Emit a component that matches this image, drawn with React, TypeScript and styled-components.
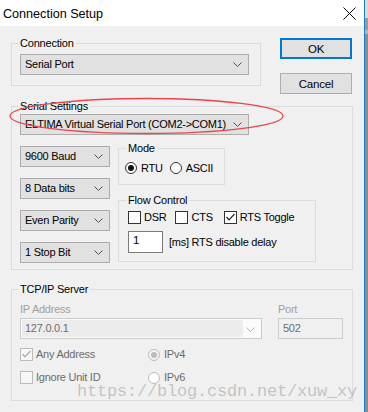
import React from 'react';
import styled, { createGlobalStyle } from 'styled-components';

const GlobalStyle = createGlobalStyle`
  html, body {
    margin: 0;
    padding: 0;
    background: #f0f0f0;
  }
  body {
    font-family: 'Liberation Sans', Arial, sans-serif;
    font-size: 11px;
    color: #000;
  }
`;

const Chevron = ({ color = '#505050' }: { color?: string }) => (
  <svg width="9" height="5" viewBox="0 0 9 5">
    <polyline points="0.5,0.5 4.5,4.5 8.5,0.5" fill="none" stroke={color} strokeWidth="1" />
  </svg>
);

const Combo = ({ text, width, disabled }: { text: string; width: number; disabled?: boolean }) => (
  <ComboFrame $w={width} $disabled={disabled}>
    <ComboText $disabled={disabled}>{text}</ComboText>
    <Chevron color={disabled ? '#b5b5b5' : '#505050'} />
  </ComboFrame>
);

const Check = ({ label, checked, disabled, gap = 10 }: { label: string; checked?: boolean; disabled?: boolean; gap?: number }) => (
  <Choice $gap={gap} $disabled={disabled}>
    <CheckBox $disabled={disabled}>
      {checked && (
        <svg width="11" height="11" viewBox="0 0 11 11">
          <polyline points="1.5,5 4,7.8 9.5,2" fill="none" stroke={disabled ? '#a8a8a8' : '#222'} strokeWidth="1.2" />
        </svg>
      )}
    </CheckBox>
    {label}
  </Choice>
);

const Radio = ({ label, checked, disabled, gap = 7 }: { label: string; checked?: boolean; disabled?: boolean; gap?: number }) => (
  <Choice $gap={gap} $disabled={disabled}>
    <RadioDot $disabled={disabled} $checked={checked} />
    {label}
  </Choice>
);

const App = () => {
  return (
    <>
      <GlobalStyle />
      <Screen>
        <DialogWindow>
          <TitleBar>
            <Title>Connection Setup</Title>
            <svg width="13" height="13" viewBox="0 0 13 13">
              <path d="M0.5 0.5 L12.5 12.5 M12.5 0.5 L0.5 12.5" stroke="#000" strokeWidth="1" />
            </svg>
          </TitleBar>

          <Body>
            <TopRow>
              <Group $w={250} $pad="5px 11px 10px 8px">
                <Legend>Connection</Legend>
                <Combo text="Serial Port" width={229} />
              </Group>
              <ButtonCol>
                <DlgButton $default>OK</DlgButton>
                <DlgButton>Cancel</DlgButton>
              </ButtonCol>
            </TopRow>

            <Group $pad="2px 8px 6px 8px" $mt={6}>
              <Legend>Serial Settings</Legend>
              <Combo text="ELTIMA Virtual Serial Port (COM2->COM1)" width={229} />
              <SerialRow>
                <SelectCol>
                  <Combo text="9600 Baud" width={90} />
                  <Combo text="8 Data bits" width={90} />
                  <Combo text="Even Parity" width={90} />
                  <Combo text="1 Stop Bit" width={90} />
                </SelectCol>
                <OptionCol>
                  <Group $w={107} $pad="8px 6px 10px 6px">
                    <Legend $ml={1}>Mode</Legend>
                    <OptionRow>
                      <Radio label="RTU" checked />
                      <Radio label="ASCII" />
                    </OptionRow>
                  </Group>
                  <Group $w={198} $pad="5px 6px 8px 9px">
                    <Legend $ml={-2}>Flow Control</Legend>
                    <OptionRow>
                      <Check label="DSR" gap={9} />
                      <Check label="CTS" gap={11} />
                      <Check label="RTS Toggle" checked />
                    </OptionRow>
                    <DelayRow>
                      <TextBox>1</TextBox>
                      [ms] RTS disable delay
                    </DelayRow>
                  </Group>
                </OptionCol>
              </SerialRow>
            </Group>

            <Group $pad="8px 8px 16px 8px" $mt={13}>
              <Legend>TCP/IP Server</Legend>
              <TcpGrid>
                <FieldLabel>IP Address</FieldLabel>
                <FieldLabel>Port</FieldLabel>
                <Combo text="127.0.0.1" width={242} disabled />
                <PortBox>502</PortBox>
              </TcpGrid>
              <TcpOptions>
                <Check label="Any Address" checked disabled />
                <Radio label="IPv4" checked disabled gap={4} />
                <Check label="Ignore Unit ID" disabled />
                <Radio label="IPv6" disabled gap={4} />
              </TcpOptions>
            </Group>
          </Body>

          <EllipseMark width="300" height="50" viewBox="0 0 300 50">
            <ellipse cx="146.5" cy="26" rx="136.5" ry="17.5" fill="none" stroke="#e8474c" strokeWidth="1.3" />
          </EllipseMark>
          <Watermark>https://blog.csdn.net/xuw_xy</Watermark>
        </DialogWindow>
        <Edge />
      </Screen>
    </>
  );
};

export default App;

const Screen = styled.div`
  display: flex;
  width: 368px;
  height: 412px;
  overflow: hidden;
`;

const DialogWindow = styled.div`
  position: relative;
  display: flex;
  flex-direction: column;
  width: 364px;
  height: 412px;
  background: #f0f0f0;
  border-right: 1px solid #1a7fd4;
`;

const Edge = styled.div`
  flex: 1;
  background: linear-gradient(#dcdcdc 0 18px, #9a9a9a 18px 30px, #b4b4b4 30px 34px, #8c8c8c 34px);
`;

const TitleBar = styled.div`
  display: flex;
  align-items: center;
  justify-content: space-between;
  height: 26px;
  padding: 0 8px 0 3px;
  background: #fff;
`;

const Title = styled.span`
  font-size: 12.6px;
  line-height: 16px;
  margin-top: 2px;
`;

const Body = styled.div`
  display: flex;
  flex-direction: column;
  padding: 11px 11px 0 11px;
`;

const TopRow = styled.div`
  display: flex;
  align-items: flex-start;
  gap: 19px;
`;

const Group = styled.fieldset<{ $w?: number; $pad: string; $mt?: number }>`
  box-sizing: border-box;
  width: ${(p) => (p.$w ? `${p.$w}px` : 'auto')};
  min-width: 0;
  margin: ${(p) => p.$mt || 0}px 0 0 0;
  padding: ${(p) => p.$pad};
  border: 1px solid #dcdcdc;
`;

const Legend = styled.legend<{ $ml?: number }>`
  margin-left: ${(p) => (p.$ml === undefined ? -2 : p.$ml)}px;
  padding: 0 2px;
  font-size: 11px;
  line-height: 12px;
  letter-spacing: -0.2px;
`;

const ComboFrame = styled.div<{ $w: number; $disabled?: boolean }>`
  box-sizing: border-box;
  display: flex;
  align-items: center;
  justify-content: space-between;
  width: ${(p) => p.$w}px;
  height: 21px;
  padding: ${(p) => (p.$disabled ? '1px 6px 0 1px' : '0 6px 0 4px')};
  border: 1px solid ${(p) => (p.$disabled ? '#cccccc' : '#adadad')};
  background: ${(p) => (p.$disabled ? '#fbfbfb' : '#e1e1e1')};
  white-space: nowrap;
`;

const ComboText = styled.span<{ $disabled?: boolean }>`
  font-size: 11px;
  line-height: 17px;
  letter-spacing: -0.25px;
  color: ${(p) => (p.$disabled ? '#6d6d6d' : '#000')};
  ${(p) =>
    p.$disabled &&
    `
    align-self: stretch;
    width: 218px;
    margin-bottom: 1px;
    padding-left: 3px;
    background: #ececec;
  `}
`;

const ButtonCol = styled.div`
  display: flex;
  flex-direction: column;
  gap: 14px;
  margin-top: 1px;
`;

const DlgButton = styled.button<{ $default?: boolean }>`
  box-sizing: border-box;
  width: 72px;
  height: 21px;
  padding: 0;
  font-family: 'Liberation Sans', Arial, sans-serif;
  font-size: 11.5px;
  letter-spacing: -0.2px;
  color: #000;
  background: #e1e1e1;
  border: ${(p) => (p.$default ? '2px solid #0078d7' : '1px solid #adadad')};
`;

const SerialRow = styled.div`
  display: flex;
  gap: 8px;
  margin-top: 7px;
`;

const SelectCol = styled.div`
  display: flex;
  flex-direction: column;
  gap: 11px;
  padding-top: 4px;
`;

const OptionCol = styled.div`
  display: flex;
  flex-direction: column;
  gap: 9px;
`;

const OptionRow = styled.div`
  display: flex;
  align-items: center;
  height: 12px;
`;

const Choice = styled.label<{ $gap: number; $disabled?: boolean }>`
  display: flex;
  align-items: center;
  gap: 4px;
  margin-right: ${(p) => p.$gap}px;
  font-size: 11px;
  line-height: 13px;
  letter-spacing: -0.25px;
  color: ${(p) => (p.$disabled ? '#6d6d6d' : '#000')};
  white-space: nowrap;
`;

const CheckBox = styled.span<{ $disabled?: boolean }>`
  box-sizing: border-box;
  display: flex;
  width: 13px;
  height: 13px;
  margin-right: -1px;
  border: 1px solid ${(p) => (p.$disabled ? '#bcbcbc' : '#333')};
  background: ${(p) => (p.$disabled ? '#f7f7f7' : '#fff')};
`;

const RadioDot = styled.span<{ $disabled?: boolean; $checked?: boolean }>`
  box-sizing: border-box;
  position: relative;
  width: 12px;
  height: 12px;
  border-radius: 50%;
  border: 1px solid ${(p) => (p.$disabled ? '#bcbcbc' : '#333')};
  background: ${(p) => (p.$disabled && p.$checked ? '#f4f4f4' : '#fff')};

  &::after {
    content: '';
    display: ${(p) => (p.$checked ? 'block' : 'none')};
    position: absolute;
    left: 2px;
    top: 2px;
    width: 6px;
    height: 6px;
    border-radius: 50%;
    background: ${(p) => (p.$disabled ? '#bcbcbc' : '#111')};
  }
`;

const DelayRow = styled.div`
  display: flex;
  align-items: center;
  gap: 6px;
  margin-top: 8px;
  font-size: 11px;
  letter-spacing: -0.25px;
  white-space: nowrap;
`;

const TextBox = styled.div`
  box-sizing: border-box;
  width: 35px;
  height: 22px;
  padding: 2px 0 0 4px;
  border: 1px solid #7a7a7a;
  background: #fff;
  font-size: 11.5px;
`;

const TcpGrid = styled.div`
  display: grid;
  grid-template-columns: 242px 65px;
  column-gap: 16px;
  row-gap: 2px;
`;

const FieldLabel = styled.span`
  font-size: 11px;
  line-height: 13px;
  letter-spacing: -0.25px;
  color: #a0a0a0;
`;

const PortBox = styled.div`
  box-sizing: border-box;
  height: 21px;
  padding: 2px 0 0 4px;
  border: 1px solid #cccccc;
  background: #f0f0f0;
  color: #6d6d6d;
  font-size: 11px;
  line-height: 15px;
  letter-spacing: -0.25px;
`;

const TcpOptions = styled.div`
  display: grid;
  grid-template-columns: 128px 1fr;
  row-gap: 10px;
  margin-top: 9px;
`;

const EllipseMark = styled.svg`
  position: absolute;
  left: 0;
  top: 90px;
  pointer-events: none;
`;

const Watermark = styled.div`
  position: absolute;
  left: 77px;
  top: 383px;
  font-family: 'Liberation Mono', 'Courier New', monospace;
  font-size: 17px;
  line-height: 17px;
  letter-spacing: -0.2px;
  color: rgba(150, 150, 150, 0.5);
  white-space: nowrap;
  pointer-events: none;
`;
